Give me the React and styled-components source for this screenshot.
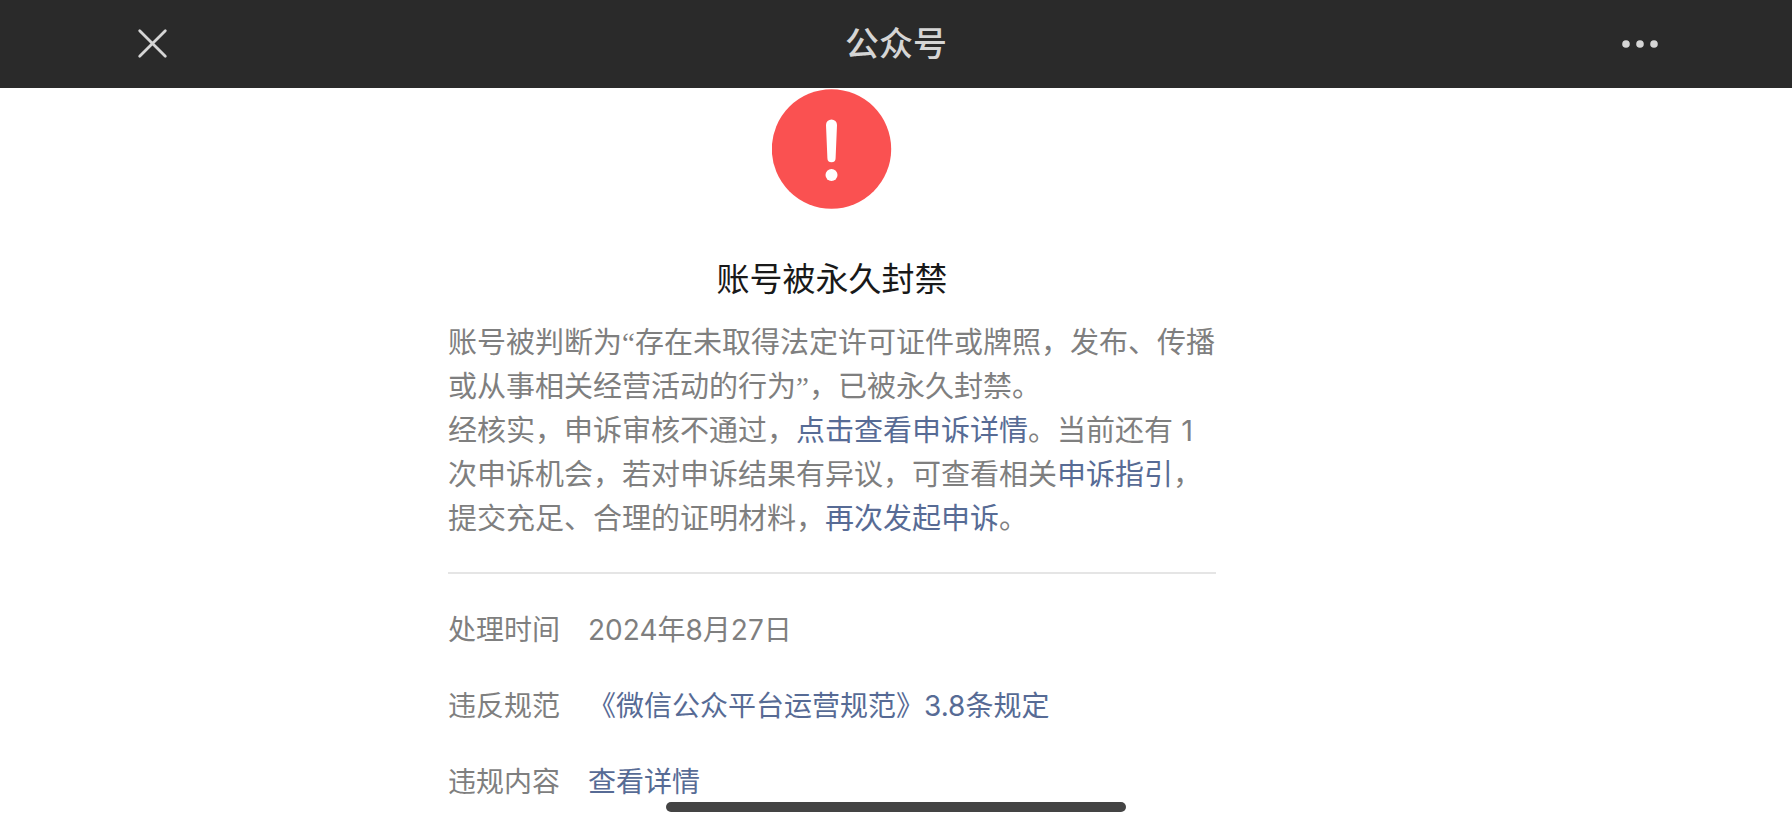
import React from 'react';
import styled, {createGlobalStyle, ThemeProvider} from 'styled-components';

const theme = {
    bar: '#2a2a2a',
    barText: '#d5d5d5',
    title: '#191919',
    text: '#7f7f7f',
    link: '#576b95',
    line: '#e5e5e5',
    warn: '#fa5151',
    indicator: '#444444'
};

const GlobalStyle = createGlobalStyle`
    * {
        box-sizing: border-box;
    }

    body {
        margin: 0;
        background-color: #fff;
        font-family: Inter, "Noto Sans CJK SC", sans-serif;
        overflow: hidden;
    }
`;

const Header = styled.header`
    display: flex;
    justify-content: space-between;
    align-items: center;
    height: 88px;
    padding: 0 136px;
    background-color: ${props => props.theme.bar};
    color: ${props => props.theme.barText};
`;

const HeaderTitle = styled.h1`
    margin: 0;
    font-size: 34px;
    font-weight: 500;
    line-height: 44px;
`;

const IconButton = styled.button`
    display: flex;
    width: 32px;
    height: 32px;
    padding: 0;
    border: 0;
    background: none;
    color: inherit;
    cursor: pointer;

    svg {
        overflow: visible;
    }
`;

const Page = styled.div`
    display: grid;
    grid-template-columns: 7fr 12fr 9fr;
`;

const Main = styled.main`
    grid-column: 2;
    display: flex;
    flex-direction: column;
    min-width: 0;
    padding: 1px 0 24px;
    color: ${props => props.theme.text};
    font-size: 29px;
    line-height: 44px;
`;

const WarnIcon = styled.svg`
    align-self: center;
    width: 120px;
    height: 120px;
    color: ${props => props.theme.warn};
`;

const Title = styled.h2`
    margin: 48px 0 20px;
    color: ${props => props.theme.title};
    font-size: 33px;
    font-weight: 400;
    line-height: 44px;
    text-align: center;
`;

const Text = styled.p`
    margin: 0;
`;

// curly quote marks, Inter only has slanted ones
const Quote = styled.span`
    font-family: "Liberation Serif", serif;
    line-height: 1;
`;

const Link = styled.a`
    color: ${props => props.theme.link};
    text-decoration: none;
`;

const Details = styled.dl`
    display: grid;
    grid-template-columns: max-content 1fr;
    gap: 32px 28px;
    margin: 31px 0 0;
    padding-top: 34px;
    border-top: 2px solid ${props => props.theme.line};
    font-size: 28px;

    dd {
        margin: 0;
    }
`;

const HomeIndicator = styled.div`
    position: fixed;
    bottom: 16px;
    left: 50%;
    width: 460px;
    height: 10px;
    margin-left: -230px;
    border-radius: 5px;
    background-color: ${props => props.theme.indicator};
`;

const App = () => (
    <ThemeProvider theme={theme}>
        <GlobalStyle/>
        <Header>
            <IconButton aria-label="关闭">
                <svg width="32" height="32" viewBox="0 0 32 32" stroke="currentColor" strokeWidth="2.8" strokeLinecap="round">
                    <path d="M3.7 2.7l25.6 25.6M29.3 2.7L3.7 28.3"/>
                </svg>
            </IconButton>
            <HeaderTitle>公众号</HeaderTitle>
            <IconButton aria-label="更多">
                <svg width="32" height="32" viewBox="0 0 32 32" fill="currentColor">
                    <circle cx="2" cy="16" r="3.8"/>
                    <circle cx="16" cy="16" r="3.8"/>
                    <circle cx="30" cy="16" r="3.8"/>
                </svg>
            </IconButton>
        </Header>
        <Page>
            <Main>
                <WarnIcon viewBox="0 0 120 120" aria-hidden="true">
                    <circle cx="59.5" cy="60" r="59.7" fill="currentColor"/>
                    <path d="M54 36a5.5 5.5 0 0 1 11 0l-1.4 33.2a4.1 4.1 0 0 1-8.2 0z" fill="#fff"/>
                    <circle cx="59.5" cy="86" r="6" fill="#fff"/>
                </WarnIcon>
                <Title>账号被永久封禁</Title>
                <Text>
                    账号被判断为<Quote>“</Quote>存在未取得法定许可证件或牌照，发布、传播或从事相关经营活动的行为<Quote>”</Quote>，已被永久封禁。
                </Text>
                <Text>
                    经核实，申诉审核不通过，<Link href="#detail">点击查看申诉详情</Link>。当前还有 1 次申诉机会，若对申诉结果有异议，可查看相关<Link href="#guide">申诉指引</Link>，提交充足、合理的证明材料，<Link href="#appeal">再次发起申诉</Link>。
                </Text>
                <Details>
                    <dt>处理时间</dt>
                    <dd>2024年8月27日</dd>
                    <dt>违反规范</dt>
                    <dd><Link href="#rule">《微信公众平台运营规范》3.8条规定</Link></dd>
                    <dt>违规内容</dt>
                    <dd><Link href="#content">查看详情</Link></dd>
                </Details>
            </Main>
        </Page>
        <HomeIndicator/>
    </ThemeProvider>
);

export default App;
